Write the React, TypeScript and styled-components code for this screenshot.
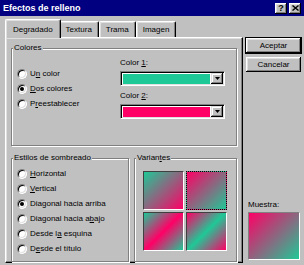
import styled, { createGlobalStyle } from "styled-components";

const GREEN = "#1fc897";
const PINK = "#ff0066";

const GlobalStyle = createGlobalStyle`
  html, body { margin: 0; padding: 0; background: #c0c0c0; }
  body {
    font-family: "Liberation Sans", Arial, sans-serif;
    font-size: 8px;
    color: #000;
  }
  * { box-sizing: border-box; }
`;

const Window = styled.div`
  width: 304px;
  height: 265px;
  display: flex;
  flex-direction: column;
  background: #c0c0c0;
  overflow: hidden;
`;

const TitleBar = styled.div`
  height: 16px;
  flex: none;
  display: flex;
  align-items: center;
  padding: 0 3px;
  background: #000080;
  color: #fff;
`;

const Title = styled.span`
  flex: 1;
  font-weight: bold;
  font-size: 9px;
  line-height: 16px;
`;

const CaptionButton = styled.span<{ $gap?: number }>`
  width: 12px;
  height: 11px;
  margin-left: ${(p) => p.$gap ?? 0}px;
  display: flex;
  align-items: center;
  justify-content: center;
  background: #c0c0c0;
  color: #000;
  font-weight: bold;
  font-size: 9px;
  line-height: 1;
  box-shadow: inset -1px -1px #000, inset 1px 1px #fff, inset -2px -2px #808080, inset 2px 2px #dfdfdf;
`;

const Body = styled.div`
  flex: 1;
  display: flex;
  padding: 3px 0 0 5px;
  min-height: 0;
`;

const Sheet = styled.div`
  width: 238px;
  flex: none;
  display: flex;
  flex-direction: column;
`;

const TabStrip = styled.div`
  height: 18px;
  flex: none;
  display: flex;
  align-items: flex-end;
  padding-left: 2px;
`;

const Tab = styled.div<{ $active?: boolean }>`
  position: relative;
  z-index: ${(p) => (p.$active ? 1 : 0)};
  height: ${(p) => (p.$active ? 19 : 16)}px;
  margin: 0 ${(p) => (p.$active ? -2 : 0)}px ${(p) => (p.$active ? -1 : 0)}px;
  padding: 0 ${(p) => (p.$active ? 7 : 6)}px;
  display: flex;
  align-items: center;
  background: #c0c0c0;
  border-top: 1px solid #fff;
  border-left: 1px solid #fff;
  border-right: 1px solid #000;
  border-radius: 2px 2px 0 0;
  box-shadow: inset -1px 0 #808080, inset 1px 1px #dfdfdf;
  white-space: nowrap;
`;

const Panel = styled.div`
  height: 226px;
  flex: none;
  display: flex;
  flex-direction: column;
  padding: 5px 5px 0;
  border: 1px solid;
  border-color: #fff #000 #000 #fff;
  box-shadow: inset -1px -1px #808080, inset 1px 1px #dfdfdf;
`;

const Group = styled.div<{ $height: number; $width?: number; $top?: number }>`
  position: relative;
  display: flex;
  height: ${(p) => p.$height}px;
  margin-top: ${(p) => p.$top ?? 0}px;
  ${(p) => (p.$width ? `width: ${p.$width}px; flex: none;` : "flex: 1;")}
  border: 1px solid #808080;
  box-shadow: inset 1px 1px #fff, 1px 1px #fff;
`;

const GroupLabel = styled.span`
  position: absolute;
  top: -6px;
  left: 1px;
  padding: 0 1px;
  line-height: 10px;
  background: #c0c0c0;
  white-space: nowrap;
`;

const GroupRow = styled.div`
  display: flex;
  gap: 5px;
  margin-top: 12px;
`;

const RadioList = styled.div<{ $top: number }>`
  display: flex;
  flex-direction: column;
  padding: ${(p) => p.$top}px 0 0 5px;
`;

const RadioRow = styled.label`
  height: 15px;
  display: flex;
  align-items: center;
  gap: 3px;
`;

const RadioText = styled.span`
  white-space: nowrap;
  line-height: 10px;
`;

const RadioDot = styled.span<{ $checked?: boolean }>`
  width: 10px;
  height: 10px;
  flex: none;
  display: flex;
  align-items: center;
  justify-content: center;
  border-radius: 50%;
  background: #fff;
  border: 1px solid;
  border-color: #808080 #fff #fff #808080;
  box-shadow: inset 1px 1px #000, inset -1px -1px #dfdfdf;

  &::after {
    content: "";
    width: 4px;
    height: 4px;
    border-radius: 50%;
    background: ${(p) => (p.$checked ? "#000" : "transparent")};
  }
`;

const Key = styled.span`
  text-decoration: underline;
`;

const ColorColumn = styled.div`
  width: 105px;
  margin: 0 11px 0 auto;
  padding-top: 9px;
  display: flex;
  flex-direction: column;
`;

const FieldLabel = styled.span<{ $top?: number }>`
  line-height: 10px;
  margin-top: ${(p) => p.$top ?? 0}px;
`;

const Combo = styled.div`
  height: 15px;
  margin-top: 3px;
  display: flex;
  padding: 1px;
  background: #fff;
  border: 1px solid;
  border-color: #808080 #fff #fff #808080;
  box-shadow: inset 1px 1px #000, inset -1px -1px #dfdfdf;
`;

const Swatch = styled.span<{ $color: string }>`
  flex: 1;
  margin: 1px 1px 0 1px;
  height: 10px;
  background: ${(p) => p.$color};
`;

const ArrowButton = styled.span`
  width: 12px;
  flex: none;
  display: flex;
  align-items: center;
  justify-content: center;
  background: #c0c0c0;
  box-shadow: inset -1px -1px #000, inset 1px 1px #dfdfdf, inset -2px -2px #808080, inset 2px 2px #fff;
`;

const VariantGrid = styled.div`
  display: grid;
  grid-template-columns: repeat(2, 41px);
  grid-auto-rows: 39px;
  gap: 2px;
  padding: 12px 0 0 8px;
  align-self: flex-start;
`;

const Variant = styled.div<{ $fill: string; $selected?: boolean }>`
  background: ${(p) => p.$fill};
  border: 1px solid;
  border-color: #404040 #fff #fff #404040;
  ${(p) => (p.$selected ? "border: 1px dotted #000;" : "")}
`;

const Side = styled.div`
  width: 57px;
  flex: none;
  margin-left: 2px;
  display: flex;
  flex-direction: column;
  padding: 19px 1px 5px;
`;

const DialogButton = styled.button<{ $default?: boolean; $top?: number }>`
  height: 15px;
  margin-top: ${(p) => p.$top ?? 0}px;
  padding: 0;
  border: none;
  font: inherit;
  color: #000;
  background: #c0c0c0;
  box-shadow: inset -1px -1px #000, inset 1px 1px #fff, inset -2px -2px #808080, inset 2px 2px #dfdfdf;
  ${(p) => (p.$default ? "outline: 1px solid #000;" : "")}
`;

const Sample = styled.div`
  margin-top: auto;
  padding-left: 2px;
  display: flex;
  flex-direction: column;
`;

const SampleBox = styled.div<{ $fill: string }>`
  width: 52px;
  height: 48px;
  margin-top: 2px;
  background: ${(p) => p.$fill};
  border: 1px solid;
  border-color: #808080 #fff #fff #808080;
`;

const fills = {
  up: `linear-gradient(135deg, ${GREEN}, ${PINK})`,
  down: `linear-gradient(135deg, ${PINK}, ${GREEN})`,
  band: `linear-gradient(135deg, ${GREEN}, ${PINK} 50%, ${GREEN})`,
  bandInv: `linear-gradient(135deg, ${PINK}, ${GREEN} 50%, ${PINK})`,
};

const shading = [
  { label: <><Key>H</Key>orizontal</> },
  { label: <><Key>V</Key>ertical</> },
  { label: <>Diagonal hacia arriba</>, checked: true },
  { label: <>Diagonal hacia a<Key>b</Key>ajo</> },
  { label: <>Desde l<Key>a</Key> esquina</> },
  { label: <>D<Key>e</Key>sde el título</> },
];

const DownArrow = () => (
  <svg width="5" height="3" viewBox="0 0 5 3">
    <path d="M0 0h5L2.5 3z" fill="#000" />
  </svg>
);

export default function App() {
  return (
    <Window>
      <GlobalStyle />
      <TitleBar>
        <Title>Efectos de relleno</Title>
        <CaptionButton>?</CaptionButton>
        <CaptionButton $gap={2}>
          <svg width="7" height="6" viewBox="0 0 7 6">
            <path d="M0.5 0.5l6 5M6.5 0.5l-6 5" stroke="#000" strokeWidth="1.4" />
          </svg>
        </CaptionButton>
      </TitleBar>

      <Body>
        <Sheet>
          <TabStrip>
            <Tab $active>Degradado</Tab>
            <Tab>Textura</Tab>
            <Tab>Trama</Tab>
            <Tab>Imagen</Tab>
          </TabStrip>

          <Panel>
            <Group $height={80} $top={5}>
              <GroupLabel>Colores</GroupLabel>
              <RadioList $top={17}>
                <RadioRow><RadioDot /><RadioText>U<Key>n</Key> color</RadioText></RadioRow>
                <RadioRow><RadioDot $checked /><RadioText><Key>D</Key>os colores</RadioText></RadioRow>
                <RadioRow><RadioDot /><RadioText>P<Key>r</Key>eestablecer</RadioText></RadioRow>
              </RadioList>
              <ColorColumn>
                <FieldLabel>Color <Key>1</Key>:</FieldLabel>
                <Combo>
                  <Swatch $color={GREEN} />
                  <ArrowButton><DownArrow /></ArrowButton>
                </Combo>
                <FieldLabel $top={5}>Color <Key>2</Key>:</FieldLabel>
                <Combo>
                  <Swatch $color={PINK} />
                  <ArrowButton><DownArrow /></ArrowButton>
                </Combo>
              </ColorColumn>
            </Group>

            <GroupRow>
              <Group $height={104} $width={118}>
                <GroupLabel>Estilos de sombreado</GroupLabel>
                <RadioList $top={7}>
                  {shading.map((s, i) => (
                    <RadioRow key={i}>
                      <RadioDot $checked={s.checked} />
                      <RadioText>{s.label}</RadioText>
                    </RadioRow>
                  ))}
                </RadioList>
              </Group>
              <Group $height={104}>
                <GroupLabel>Varian<Key>t</Key>es</GroupLabel>
                <VariantGrid>
                  <Variant $fill={fills.up} />
                  <Variant $fill={fills.down} $selected />
                  <Variant $fill={fills.band} />
                  <Variant $fill={fills.bandInv} />
                </VariantGrid>
              </Group>
            </GroupRow>
          </Panel>
        </Sheet>

        <Side>
          <DialogButton $default>Aceptar</DialogButton>
          <DialogButton $top={4}>Cancelar</DialogButton>
          <Sample>
            <FieldLabel>Muestra:</FieldLabel>
            <SampleBox $fill={fills.down} />
          </Sample>
        </Side>
      </Body>
    </Window>
  );
}
